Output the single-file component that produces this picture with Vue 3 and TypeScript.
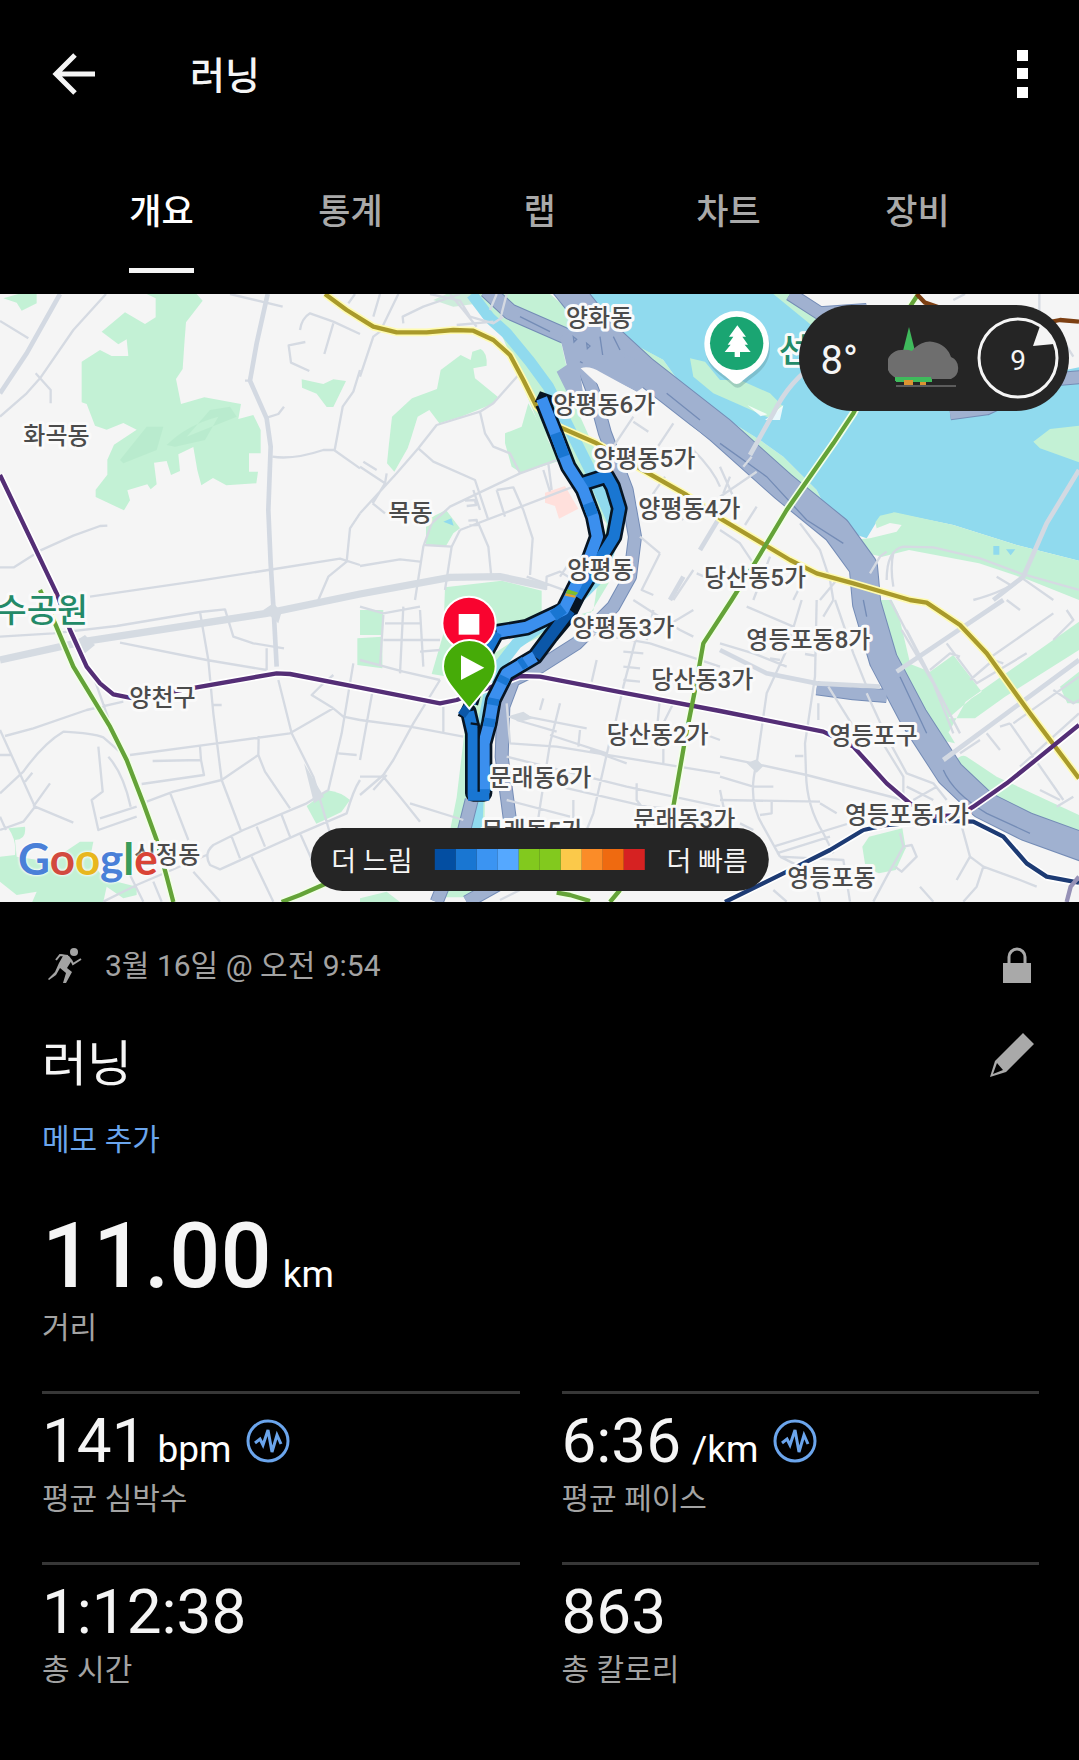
<script setup lang="ts">
import { ref } from 'vue'

interface Tab { id: string; label: string }
interface Stat { value: string; unit?: string; label: string; chart?: boolean }
interface Place { name: string; x: number; y: number }
interface Sheet { x: number; y: number; lines: string }

const tabs: Tab[] = [
  { id: 'overview', label: '개요' },
  { id: 'stats', label: '통계' },
  { id: 'laps', label: '랩' },
  { id: 'charts', label: '차트' },
  { id: 'gear', label: '장비' },
]
const activeTab = ref('overview')

const stats: Stat[] = [
  { value: '141', unit: 'bpm', label: '평균 심박수', chart: true },
  { value: '6:36', unit: '/km', label: '평균 페이스', chart: true },
  { value: '1:12:38', label: '총 시간' },
  { value: '863', label: '총 칼로리' },
]

const paceColors = ['#034ea2', '#1976d2', '#3b94f2', '#55a8ff', '#82c91e', '#82c91e', '#fbc94a', '#fb8c28', '#ef6a10', '#d62222']

const googleLetters = [
  { ch: 'G', color: '#4a80d8' },
  { ch: 'o', color: '#d24a3f' },
  { ch: 'o', color: '#e8b71e' },
  { ch: 'g', color: '#4a80d8' },
  { ch: 'l', color: '#3a9c5a' },
  { ch: 'e', color: '#d94436' },
]

const places: Place[] = [
  { name: '화곡동', x: 70, y: 463 },
  { name: '목동', x: 1165, y: 692 },
  { name: '양화동', x: 1698, y: 107 },
  { name: '양평동6가', x: 1660, y: 370 },
  { name: '양평동5가', x: 1780, y: 530 },
  { name: '양평동4가', x: 1915, y: 681 },
  { name: '양평동', x: 1702, y: 863 },
  { name: '당산동5가', x: 2112, y: 888 },
  { name: '양평동3가', x: 1717, y: 1038 },
  { name: '영등포동8가', x: 2239, y: 1074 },
  { name: '당산동3가', x: 1954, y: 1194 },
  { name: '당산동2가', x: 1820, y: 1360 },
  { name: '영등포구', x: 2488, y: 1363 },
  { name: '문래동6가', x: 1468, y: 1487 },
  { name: '영등포동1가', x: 2535, y: 1598 },
  { name: '문래동5가', x: 1444, y: 1646 },
  { name: '문래동3가', x: 1900, y: 1614 },
  { name: '영등포동', x: 2362, y: 1787 },
  { name: '양천구', x: 388, y: 1248 },
  { name: '신정동', x: 402, y: 1718 },
]

// Street lines, grouped by map sheet; each sheet has its own origin.
const streets: Sheet[] = [
  { x: 0, y: 0, lines: 'M0 93L85 145M318 12L220 120 120 265 80 310 0 380M107 250L152 300V340M0 832H42L120 782 220 737 300 708 322 707M690 12L848 50M803 382L835 372 852 350M817 500Q880 510 970 480L1002 480 1080 535M900 120Q905 85 930 70L1000 95 1080 132M1000 100L973 192M916 156L866 166 873 218 928 243M1080 240L1060 305 1028 350 1004 480M270 920L600 872 805 840 1020 806 1080 825M1080 670L1050 715 1040 815 985 860 955 930M735 272H750M1065 12L1045 40' },
  { x: 1080, y: 0, lines: 'M115 12L60 125 40 140 0 260M60 12L40 80M130 100L128 80 190 50 300 12M210 12L300 32 330 80 400 100 430 80M270 12L310 60 350 110M290 105L400 95M480 250L400 340 360 365 230 405 175 475 110 550 0 670M360 365L375 430 400 470 450 490 480 550M175 475L220 515 345 570 385 690M0 530L75 580 38 640M10 515L50 540M38 640L75 670M80 550L75 580M590 510L480 550 270 650 215 700 190 770 165 930M300 720L640 590M300 720L275 770 255 900M340 600L360 660M410 600L435 680M410 600L460 592 490 660 518 745 510 855M315 632L345 630 348 645 320 648M325 692L350 690 352 705 328 706M355 700L385 770 395 870M195 765L275 770M0 828L120 808 180 815M550 540L570 605M565 520L575 600M558 900L560 860 600 845 625 860M640 800L600 860M900 790L845 900 880 915M1000 840L940 930M900 790L840 740M1010 850L1080 880M820 380L740 500M820 395L865 425M940 400L880 490M915 560L880 610 970 690M1000 480Q1060 540 1080 590M500 860L640 910M440 12L420 90M410 12L390 60' },
  { x: 2160, y: 0, lines: 'M0 620L110 545M110 650L75 705M0 530L40 620M30 560L10 610M95 500L70 530M0 720L60 760 100 820M150 800L100 930M240 700L300 780 330 870 340 930M245 880L220 930M350 870L300 930M500 870Q500 780 550 770L640 772 780 805 900 850 1077 900M520 790Q510 830 520 890M500 785L480 800 450 850M735 12L700 30M880 890L830 860M958 12V90M1010 120L1060 200M900 860L1000 930M905 860Q870 900 760 930' },
  { x: 0, y: 930, lines: 'M0 110L160 100 350 78 600 36 675 28 700 110 760 130 852 145M360 128L620 180 800 210M800 145V210M600 36L625 180 640 340 665 540 722 690M640 315H665M15 408L100 385 260 330 370 305M0 390L105 620 70 665 0 690M105 620L220 668M0 465H32M0 580L70 515Q130 430 190 395Q280 400 310 412L365 460M75 545L97 518M100 620L150 550M390 465L650 430 870 400 1000 325M875 400L940 530 990 700M600 440L603 480 458 483M603 480L612 525 425 552M665 540L775 465 776 408M775 465L795 515 870 625M440 605L520 575 665 540M510 578L565 720M295 440L308 575 275 600 295 690 410 650M300 655L410 620M325 470Q370 520 392 620M270 200L325 355M1000 325L935 285 965 255 1000 225M1000 325L1030 350 1080 360M1060 190L1025 400 985 570 920 610 730 690 640 735Q610 760 630 795L660 808 900 700 1040 640Q1060 570 1080 540M770 680L795 740M845 645L870 710M695 710L720 775M755 770L820 905M900 700L945 800M1015 460L1070 465M310 905L410 855 620 765M390 825L430 905M460 845L485 905M580 815L660 905M0 650L18 690M835 240L875 400' },
  { x: 1080, y: 930, lines: 'M0 20L70 40 180 20M0 180L130 215 240 240M70 45L60 200M130 20L120 220M180 30L190 200M75 70H180M70 120H240M180 155L240 150M240 240L160 370 100 480 70 525 0 585M40 260L0 480M0 360L150 380 310 410M250 320V395M0 530H70L120 590 180 665M80 525L40 570M150 610L310 660M440 310L450 430M550 295L540 330M470 360L590 395M500 350L680 385M600 310L570 430 540 620 530 690M450 430L590 440 1080 520M570 405L740 460M440 470L800 560 1080 620M660 390L655 440M750 420L700 640 680 690M690 450L800 490M840 70L790 260 750 440M870 130L1080 200M790 155L850 160M790 200L840 205M790 240L840 245M710 180L695 245M880 30L860 120M700 100L870 130M910 440V490M830 550V600L890 680M600 560L860 620 1080 640M940 310L910 370M820 0L960 90 1000 110M1000 30L900 90M440 600L630 650M420 900L480 870M900 290L890 400M1000 390L1080 420M640 600V690' },
  { x: 2160, y: 930, lines: 'M0 130L100 160 200 200M80 20L220 80M245 0L200 150 140 280 110 490Q80 600 130 680L180 770M290 0L285 230 255 430 258 520Q260 620 310 700L340 760M310 50L340 0M345 0L400 160 440 260M325 260L400 380M150 175L180 180M255 162L290 168M225 468H250M295 310V360M440 280L500 410 560 520 640 550 680 600M470 400L550 530 550 600M0 470L100 490 260 525 550 600M0 530L100 560 160 560M0 600L300 605M300 610L350 640M0 570L25 690M160 740L420 660M170 760L330 710M180 770L280 820 300 905M180 770L370 780 390 905M100 690L60 670M155 600V640L120 645M540 700L550 740 500 830 460 905M550 740L575 735 590 770 545 815 525 800M720 660L750 770 710 840M750 770L790 800 770 860 730 905M790 800L900 840 950 860M545 90L640 250 700 400M560 90L720 400M510 0L720 400M630 210L690 160 720 170M750 240L820 180 850 190M680 130L770 250 920 160M800 180L1000 40M860 0L900 30M1040 30L1060 60 1000 120M870 370L1030 600M880 370L1077 230M1020 600L960 570M900 500L1077 340M800 400L840 450M840 380L870 370M780 420L720 460M1060 590L1010 620M160 870L200 905M1000 270L1060 310 1077 300M580 600L650 560M560 560L640 600M600 860L640 905' },
]
</script>

<template>
  <main class="screen">
    <header class="topbar">
      <button class="icon-button" type="button" aria-label="뒤로">
        <svg width="44" height="44" viewBox="0 0 44 44" fill="none" stroke="#f5f5f5" stroke-width="5">
          <path d="M23 3L4 22l19 19M4 22h39" />
        </svg>
      </button>
      <h1 class="topbar-title">러닝</h1>
      <button class="icon-button" type="button" aria-label="더보기">
        <svg width="11" height="48" viewBox="0 0 11 48" fill="#fff">
          <path d="M0 0h11v11H0zM0 18h11v11H0zM0 37h11v11H0z" />
        </svg>
      </button>
    </header>

    <nav class="tabs">
      <button
        v-for="tab in tabs"
        :key="tab.id"
        class="tab"
        :class="{ active: tab.id === activeTab }"
        type="button"
        @click="activeTab = tab.id"
      >
        <span class="tab-label">{{ tab.label }}</span>
      </button>
    </nav>

    <section class="map">
      <svg class="map-canvas" viewBox="0 12 3237 1824" role="img" aria-label="러닝 경로">
        <rect y="12" width="3237" height="1824" fill="#f5f5f5" />

        <g fill="#c3f1d5">
          <path d="M10 25L55 12h55v28L65 62 50 38zM440 12h150l18 20-50 65-5 65-5 75-20 30 15 75 70-20 110 20-8 45 45-12 22 45v70h-35v55h27l-5 35-90 6-40-22-35 22-12-45-12-70-45 22 5 50-27 12-13-42-38 5 8 65-18 15-10-15-60 18 8 30-18 30-85-40v-22l35-45v-45l20-45 68-45-40-20-50 20-35-12-25-65-15-5V215l55-35 35 18h50l-5-50-25 15-50-38 70-58 60 35 32-20V25z" />
          <path d="M905 268l65 14 30-14 38 5-38 78h-20l-30-40-44-18z" />
          <path d="M1322 240l60-45 30 15 5-25 25-8q20 10 18 50l-40 8 5 30 68 55-10 20-100 40-65 20-30-40-35 20-20 65-10 30-40 70-22-25 5-50 10-90 60-55 75-28z" />
          <path d="M1585 340l80 150 20 20-120 40-30-20-20-70v-30l50-20z" />
          <path d="M1278 690l60-30 42 55-20 15-22 38-60-5z" />
          <path d="M1335 892l170-20 120 30v60q-20 50-90 65l-100 10-80 125-60-10 35-120z" />
          <path d="M1410 12h240l140 120-110 10 20 90 10 80 90 200 50 200-20 160-60 100-240 110-70 120-10 620h-140l60-300 30-250 80-180 120-80 180-50 40-260-200-290-120-290z" />
          <path d="M1072 1045v80l75 10v-95zM1080 960h70l-4 75h-66z" />
          <path d="M2321 12h48l170 110-20 40zM1845 130l145 80 50 70 120 95 120 75 70 50 100 100 35 70-45-20-280-218-230-182z" />
          <path d="M920 1548l62-47q40 5 68 29l-26 36q-30 15-75 35z" />
          <path d="M0 1700l45-5q5-45-20-80l50-5q5 40-30 40l5 50 100 15 90-60h40l-10 50 40 60 100 25v25l-40 10-50-35-10 45-10 40H80l30-70-60 10-50-40z" />
          <path d="M1080 1825l80-20 40 31h-120z" />
          <path d="M2587 1670l20-30 100-25 10 60-30 65-50 10-40-15z" />
          <path d="M2630 930h45l20 40 40 170 130 220-45-10-110-140-40-75z" />
          <path d="M2790 1145l70-50 85 110-30 20-70 60h80l90-65L3237 1080v-85l-340 240-50 90-65 15-95-145-50-45 50-45zM3180 1190l57-45v95h-35z" />
          <path d="M2860 1420q20-30 40-20l90 60 247 115v70l-110-25-220-120z" />
        </g>
        <g fill="#b4e8ca" opacity=".6">
          <path d="M500 755q60-60 155-85l-40 70-90 20zM360 800l80-100 50 0-20 70-100 40zM480 180l60-85-20 70zM560 730l150-60-20-30-60 10zM1300 320l110-50 30 60-80 10z" transform="translate(0 -290)" />
        </g>

        <path fill="#ffe0dc" d="M1635 608l60-20 40 68-58 30-12-38-30-10z" />

        <path fill="#90daee" d="M1735 12l125 128 130 70 50 70 120 95 120 75 70 50 100 100 35 70 70 60 45 15 30-50 50-27 180 37 190 60 187 47V12z" />
        <path fill="#f5f5f5" d="M2369 12l150 160 330 140 388-80V12z" />
        <g fill="#c3f1d5">
          <path d="M1735 12l125 128 130 70-140 50-150-248zM2070 205l45 10 45 55h60l90 40 40 40-40 35-90-40-80-35-60-50zM3100 455l50-38 87-10v110l-117-42zM2320 12h50l170 120v60z" />
          <path d="M2610 745l80-20 15-20-35-6-40 16-4-18 14-20 44-10 176 38 190 60 187 47v118l-150-60-150-50-210-40-80 20-90-20-70-40 20-20 45 30z" />
        </g>
        <path fill="#fff" opacity=".8" d="M2350 345l-10 45h-45zM2242 345l60 28-20 6z" />
        <path fill="#90daee" d="M1330 695l24-10 7 22zM2980 768h18v26h-18zM3018 778h28l-14 18z" />

        <g class="stream">
          <path d="M1415 12L1470 85 1520 130 1590 215 1645 290 1700 400 1770 540 1850 720 1800 860 1720 940 1550 1060 1480 1150 1440 1350 1430 1630" />
        </g>

        <g class="highway edge">
          <path class="wide" d="M1690 -20L1810 130 1930 240 2160 420 2350 590 2510 720 2590 830 2600 940 2650 1110 2740 1280 2850 1450 2950 1545 3080 1610 3260 1675" />
          <path d="M1460 0L1530 65 1690 135 1800 180 1900 230" />
          <path class="slim" d="M1750 230L1785 320 1815 430 1880 600 1905 740 1890 860 1840 950 1730 1060 1620 1130 1540 1170 1510 1250 1505 1400 1535 1630" />
          <path class="slim" d="M1415 1530L1385 1650 1310 1836M1500 1780L1400 1836" />
          <path class="slim" d="M2370 12L2460 70 2600 60" />
          <path class="slim" d="M2450 1195L2560 1210 2660 1218" />
          <path class="slim" d="M2850 370L2960 355 3140 270 3260 260" />
        </g>
        <g class="highway body">
          <path class="wide" d="M1690 -20L1810 130 1930 240 2160 420 2350 590 2510 720 2590 830 2600 940 2650 1110 2740 1280 2850 1450 2950 1545 3080 1610 3260 1675" />
          <path d="M1460 0L1530 65 1690 135 1800 180 1900 230" />
          <path class="slim" d="M1750 230L1785 320 1815 430 1880 600 1905 740 1890 860 1840 950 1730 1060 1620 1130 1540 1170 1510 1250 1505 1400 1535 1630" />
          <path class="slim" d="M1415 1530L1385 1650 1310 1836M1500 1780L1400 1836" />
          <path class="slim" d="M2370 12L2460 70 2600 60" />
          <path class="slim" d="M2450 1195L2560 1210 2660 1218" />
          <path class="slim" d="M2850 370L2960 355 3140 270 3260 260" />
        </g>
        <path fill="#a0b1d0" d="M1680 140l80-35 80 20 40 90 60 70-30 20-120-60-50 0 10 70-50-10-30-60 30-20z" />
        <path fill="none" stroke="#748cb6" stroke-width="4" d="M1720 140l10 8-8 8zM1760 160l10 8-8 8zM1740 215l8 4M1800 140l8 55M1840 140l20 40M2160 460L2300 560 2420 690 2530 760M2590 930L2600 980M2700 1160L2780 1330M2830 1440Q2860 1510 2960 1570L3090 1630M2000 310L2100 390M1560 80L1650 125" />
        <path fill="#f5f5f5" d="M1742 235q25-10 60 12l165 90 110 75q90 60 85 130l-20 20q-60-60-140-140l-90-40-130-110z" />

        <g class="streets">
          <g v-for="(sheet, i) in streets" :key="i" :transform="`translate(${sheet.x} ${sheet.y})`">
            <path :d="sheet.lines" />
          </g>
        </g>
        <g class="avenues">
          <path d="M180 12L80 190 0 310" />
          <path d="M803 12L770 160 750 272 800 385 812 470 805 660 812 820 822 980 830 1130" />
          <path d="M2450 220Q2370 270 2320 370L2250 495M3237 540L3140 700 3070 860 2980 930M2160 1080L2300 1150 2450 1180 2640 1190M2690 1145L3010 930M2830 1410L3237 1110M2100 780L2160 680M2050 860L2010 930" />
        </g>
        <g class="arterial">
          <path d="M0 1110L250 1055 800 970 1080 912 1350 862 1500 860 1640 890" />
        </g>
        <path fill="#d5dbe2" d="M912 1420l30 120 30-20zM790 960l30-20 25 25-10 35zM215 1060l40-25 30 30-30 25zM1520 1280l50-15 30 20-40 10zM2240 1420l30-12 20 20-20 20z" />

        <g class="rail-halo">
          <path d="M975 12L1040 60 1080 85 1120 110 1190 127H1280L1360 120 1420 122 1480 150 1530 195 1570 270 1610 350 1680 412 1790 460 1910 530 2060 615 2160 685 2370 810 2450 850 2560 880 2730 930 2780 938 2880 1005 2960 1090 3090 1270 3237 1465" stroke="#fffbb0" />
          <path d="M0 555L170 910 210 1020 260 1130 300 1180 340 1213 400 1225 590 1192 830 1150 870 1152 1080 1193 1320 1240 1370 1230 1560 1158 1620 1160 1880 1210 2160 1263 2470 1325 2560 1370 2660 1480 2730 1540 2800 1580 2880 1575 2920 1550 3020 1480 3120 1400 3237 1305" />
          <path d="M120 900L165 1000 220 1130 330 1310 380 1410 430 1540 470 1650 500 1760 520 1836M2755 12L2730 50 2560 370 2500 460 2360 660 2270 810 2195 930 2110 1060 2085 1200 2055 1350 2020 1550M845 1836L900 1815 980 1780 1080 1740M1670 1808L1710 1815 1770 1833M1830 1836L1860 1800" stroke="#f2ffe8" />
          <path d="M2175 1836L2350 1750 2490 1680 2590 1620 2660 1605 2800 1592 2920 1595 3010 1640 3080 1720 3140 1760 3237 1778" />
        </g>
        <g class="rail">
          <path stroke="#a99a2b" d="M975 12L1040 60 1080 85 1120 110 1190 127H1280L1360 120 1420 122 1480 150 1530 195 1570 270 1610 350 1680 412 1790 460 1910 530 2060 615 2160 685 2370 810 2450 850 2560 880 2730 930 2780 938 2880 1005 2960 1090 3090 1270 3237 1465" />
          <path stroke="#542e76" d="M0 555L170 910 210 1020 260 1130 300 1180 340 1213 400 1225 590 1192 830 1150 870 1152 1080 1193 1320 1240 1370 1230 1560 1158 1620 1160 1880 1210 2160 1263 2470 1325 2560 1370 2660 1480 2730 1540 2800 1580 2880 1575 2920 1550 3020 1480 3120 1400 3237 1305" />
          <path stroke="#64a338" d="M120 900L165 1000 220 1130 330 1310 380 1410 430 1540 470 1650 500 1760 520 1836M2755 12L2730 50 2560 370 2500 460 2360 660 2270 810 2195 930 2110 1060 2085 1200 2055 1350 2020 1550M845 1836L900 1815 980 1780 1080 1740M1670 1808L1710 1815 1770 1833M1830 1836L1860 1800" />
          <path stroke="#1d3b74" d="M2175 1836L2350 1750 2490 1680 2590 1620 2660 1605 2800 1592 2920 1595 3010 1640 3080 1720 3140 1760 3237 1778" />
          <path stroke="#9691b6" d="M3237 1760L3212 1790 3200 1836" />
          <path stroke="#7c3f12" d="M2750 12L2775 38 2840 60M3140 98L3180 90 3237 95" />
        </g>

        <g class="route-edge">
          <path d="M1630 340L1670 440 1705 530 1750 600 1780 680 1792 740 1770 800 1720 900 1690 960 1580 1012 1490 1027 1450 1100 1410 1240" />
          <path d="M1750 580L1820 558 1838 590 1858 655 1842 740 1780 840 1730 920 1700 980 1650 1040 1605 1100 1520 1150 1480 1230 1468 1300 1452 1360 1452 1510H1420V1330L1405 1265 1384 1255" />
        </g>
        <path fill="#071523" d="M1604 336l16-32 40 14v30z" />
        <g class="route">
          <path stroke="#1976d2" d="M1750 580L1820 558 1838 590 1858 655 1842 740 1780 840 1730 920" />
          <path stroke="#0b57a8" d="M1710 960L1650 1040 1605 1100" />
          <path stroke="#3b8fee" d="M1625 325L1670 440 1705 530 1750 600 1780 680 1792 740 1770 800 1720 900 1690 960 1580 1012 1490 1027" />
          <path stroke="#1976d2" d="M1667 430L1692 500M1490 1027L1450 1100 1410 1240M1765 640L1778 675M1420 1520V1330L1405 1265M1660 978L1690 955" />
          <path stroke="#3b8fee" d="M1605 1100L1520 1150 1480 1230 1468 1300 1452 1360 1452 1510" />
          <path stroke="#0b57a8" d="M1405 1270L1384 1255" />
          <path stroke="#1976d2" d="M1575 1115L1560 1125M1515 1160L1505 1180M1482 1225L1478 1245M1470 1285L1466 1310M1404 1515H1468" />
        </g>
        <path fill="#7fbf2a" d="M1703 898l32 10-8 8-30-6z" />
        <path fill="#e3a22c" d="M1698 910l30 7-3 6-30-6z" />
        <path stroke="#071523" stroke-width="7" fill="none" d="M1436 1310V1505M1412 1300l26 4" />

        <g class="places">
          <text v-for="place in places" :key="place.name" :x="place.x" :y="place.y">{{ place.name }}</text>
        </g>
        <g class="parks">
          <text x="-12" y="997">수공원</text>
          <text x="2336" y="215">선</text>
        </g>

        <path d="M2210 66a97 97 0 0 0-97 97c0 55 35 78 62 98 18 14 25 24 35 24s17-10 35-24c27-20 62-43 62-98a97 97 0 0 0-97-97z" fill="#5b8d93" opacity=".35" transform="translate(3 8)" />
        <path d="M2210 63a97 97 0 0 0-97 97c0 55 35 78 62 98 18 14 25 24 35 24s17-10 35-24c27-20 62-43 62-98a97 97 0 0 0-97-97z" fill="#fff" />
        <circle cx="2210" cy="160" r="80" fill="#1aa572" />
        <path fill="#fff" d="M2212 106l26 34h-11l17 24h-10l18 22h-32v15h-16v-15h-30l18-22h-9l17-24h-13z" />

        <circle cx="1407" cy="1000" r="80" fill="#f9042f" stroke="#fff" stroke-width="6" />
        <path fill="#fff" d="M1376 972h62v62h-62z" />
        <path d="M1408 1050a79 79 0 0 0-79 79c0 42 36 72 79 127 43-55 79-85 79-127a79 79 0 0 0-79-79z" fill="#46ab08" stroke="#fff" stroke-width="6" />
        <path fill="#fff" d="M1383 1096v74l70-37z" />
      </svg>

      <span class="google" aria-label="Google"><span v-for="(l, i) in googleLetters" :key="i" :style="{ color: l.color }">{{ l.ch }}</span></span>

      <div class="weather">
        <span class="temp">8°</span>
        <svg width="76" height="62" viewBox="0 0 76 62" aria-hidden="true">
          <path fill="#3fba5c" d="M21 0l6 24H15zM8 50h36v5H8z" />
          <path fill="#6e6e6e" d="M14 52a14 14 0 0 1-1-29q6-1 11 1a22 22 0 0 1 39 6 12 12 0 0 1 0 22z" />
          <path fill="#3fba5c" d="M7 50h36v4H7z" />
          <path fill="#dc9432" d="M16 53h9v5h-9zM32 55h6v3h-6z" />
          <path fill="#5c5c5c" d="M8 58h60v2H8z" />
        </svg>
        <span class="wind">
          <svg class="wind-ring" width="84" height="84" viewBox="0 0 84 84" aria-hidden="true">
            <circle cx="42" cy="42" r="39" fill="none" stroke="#f5f5f5" stroke-width="3" />
            <path fill="#f5f5f5" d="M64 10q10 7 14 18l-21 2z" />
          </svg>
          <span class="wind-speed">9</span>
        </span>
      </div>

      <div class="legend">
        <span>더 느림</span>
        <span class="scale"><i v-for="(c, i) in paceColors" :key="i" :style="{ background: c }"></i></span>
        <span>더 빠름</span>
      </div>
    </section>

    <section class="details">
      <div class="meta">
        <svg class="runner" width="36" height="36" viewBox="0 0 36 36" aria-hidden="true">
          <circle cx="27" cy="5" r="4" fill="#a3a3a3" />
          <path fill="none" stroke="#a3a3a3" stroke-width="2" d="M9 13l4-5 8 1M24 13l2 4 8-5" />
          <path fill="#a3a3a3" d="M13 7l9 2 3 4-5 8 5 4-6 11h-3l3-10-6-5-4 7-7 5-1-1 7-7 4-9 4-7z" />
        </svg>
        <span class="date">3월 16일 @ 오전 9:54</span>
        <svg class="lock" width="28" height="36" viewBox="0 0 28 36" aria-label="비공개">
          <path fill="#a9a9a9" d="M0 16h28v20H0z" />
          <path fill="none" stroke="#a9a9a9" stroke-width="3" d="M6 17V10a8 8 0 0 1 16 0v7" />
        </svg>
      </div>

      <div class="heading">
        <h2>러닝</h2>
        <button class="icon-button edit" type="button" aria-label="편집">
          <svg width="44" height="44" viewBox="0 0 44 44">
            <path fill="#a9a9a9" fill-rule="evenodd" d="M33 0l11 11-28 28-16 5 5-16zM7 30l-4 11 10-4z" />
          </svg>
        </button>
      </div>
      <a class="note" href="#">메모 추가</a>

      <div class="distance">
        <p class="value distance-value"><span>11.00</span><span class="unit">km</span></p>
        <p class="label">거리</p>
      </div>

      <div class="stats">
        <div v-for="stat in stats" :key="stat.label" class="stat">
          <p class="value">
            <span>{{ stat.value }}</span>
            <span v-if="stat.unit" class="unit">{{ stat.unit }}</span>
            <svg v-if="stat.chart" class="chart" width="44" height="44" viewBox="0 0 44 44" fill="none" stroke="#6ba5ec" aria-hidden="true">
              <circle cx="22" cy="22" r="20" stroke-width="3" />
              <path stroke-width="3" d="M9 24l5-4 3 6 5-15 4 22 5-17 4 9" />
            </svg>
          </p>
          <p class="label">{{ stat.label }}</p>
        </div>
      </div>
    </section>
  </main>
</template>

<style>
body {
  margin: 0;
  background: #000;
}
</style>

<style scoped>
.screen {
  min-height: 100vh;
  background: #000;
  color: #f5f5f5;
  font-family: Roboto, "Noto Sans CJK KR", sans-serif;
}
h1,
h2,
p {
  margin: 0;
  font-weight: 400;
}
button {
  border: 0;
  padding: 0;
  background: none;
  font: inherit;
  color: inherit;
}
.icon-button {
  display: flex;
}
.topbar {
  display: flex;
  align-items: center;
  height: 148px;
  padding: 0 51px 0 52px;
}
.topbar-title {
  flex: 1;
  margin-left: 94px;
  padding-top: 3px;
  font-size: 38px;
  line-height: 56px;
  font-weight: 500;
}
.tabs {
  display: flex;
  padding: 0 67px 21px;
}
.tab {
  flex: 1;
  color: #a9a9a9;
  font-size: 35px;
  font-weight: 500;
}
.tab-label {
  display: inline-block;
  padding-top: 10px;
  line-height: 110px;
  border-bottom: 5px solid transparent;
}
.tab.active {
  color: #fff;
}
.tab.active .tab-label {
  border-color: #f5f5f5;
}

.map {
  position: relative;
  overflow: hidden;
}
.map-canvas {
  display: block;
  width: 100%;
}
.stream {
  fill: none;
  stroke: #90daee;
  stroke-width: 34;
}
.highway {
  fill: none;
  stroke-linejoin: round;
}
.edge path {
  stroke: #748cb6;
  stroke-width: 50;
}
.body path {
  stroke: #a0b1d0;
  stroke-width: 44;
}
.edge .wide {
  stroke-width: 88;
}
.body .wide {
  stroke-width: 82;
}
.edge .slim {
  stroke-width: 42;
}
.body .slim {
  stroke-width: 36;
}
.streets {
  fill: none;
  stroke: #d5dae2;
  stroke-width: 7;
  stroke-linejoin: round;
}
.avenues {
  fill: none;
  stroke: #d3d9e2;
  stroke-width: 14;
}
.arterial {
  fill: none;
  stroke: #d5dbe2;
  stroke-width: 22;
}
.rail-halo,
.rail {
  fill: none;
  stroke-width: 13;
  stroke-linejoin: round;
}
.rail-halo {
  stroke: #fff;
  stroke-width: 23;
}
.route,
.route-edge {
  fill: none;
  stroke: #071523;
  stroke-width: 50;
  stroke-linejoin: round;
}
.route {
  stroke-width: 34;
}
.places,
.parks {
  fill: #4b4b4b;
  font-size: 72px;
  font-weight: 500;
  stroke: #fafafa;
  stroke-width: 18;
  stroke-linejoin: round;
  paint-order: stroke;
}
.parks {
  fill: #238a68;
  font-size: 100px;
}
.google {
  position: absolute;
  left: 18px;
  bottom: 14px;
  font-family: Lato, sans-serif;
  font-size: 44px;
  font-weight: 700;
  line-height: 60px;
  text-shadow: 0 0 3px #fff, 0 0 3px #fff;
}
.weather {
  position: absolute;
  top: 11px;
  right: 10px;
  display: flex;
  align-items: center;
  gap: 22px;
  height: 106px;
  padding: 0 9px 0 22px;
  border-radius: 53px;
  background: #252525;
}
.temp {
  padding: 4px 8px 0 0;
  font-size: 40px;
}
.wind {
  position: relative;
  display: grid;
  place-items: center;
  width: 84px;
  height: 84px;
  margin-left: -10px;
  font-size: 28px;
}
.wind-speed {
  padding-top: 4px;
}
.wind-ring {
  position: absolute;
  inset: 0;
}
.legend {
  position: absolute;
  left: 50%;
  bottom: 11px;
  transform: translateX(-50%);
  display: flex;
  align-items: center;
  gap: 22px;
  height: 63px;
  padding: 0 21px;
  border-radius: 32px;
  background: #252525;
  font-size: 27px;
  white-space: nowrap;
}
.scale {
  display: flex;
}
.scale i {
  width: 21px;
  height: 21px;
}

.details {
  padding: 38px 40px 70px 42px;
}
.meta {
  display: flex;
  align-items: center;
  height: 50px;
  color: #a3a3a3;
  font-size: 30px;
}
.date {
  padding-bottom: 4px;
}
.runner {
  margin: 0 22px 0 5px;
}
.lock {
  margin: 0 8px 0 auto;
}
.heading {
  display: flex;
  justify-content: space-between;
  margin-top: 38px;
}
.heading h2 {
  font-size: 49px;
  line-height: 74px;
}
.edit {
  align-self: flex-start;
  padding: 5px;
}
.note {
  display: block;
  width: max-content;
  margin-top: 18px;
  color: #6ba5ec;
  font-size: 30px;
  line-height: 40px;
  text-decoration: none;
}
.distance {
  margin: 45px 0 43px;
}
.value {
  display: flex;
  align-items: baseline;
  font-size: 62px;
  line-height: 76px;
}
.distance-value {
  font-size: 90px;
  font-weight: 500;
  line-height: 103px;
}
.unit {
  margin-left: 11px;
  color: #fff;
  font-size: 37px;
  font-weight: 400;
  line-height: 38px;
}
.label {
  color: #a3a3a3;
  font-size: 30px;
  line-height: 40px;
}
.stats {
  display: grid;
  grid-template-columns: 1fr 1fr;
  column-gap: 42px;
}
.stat {
  padding: 9px 0 43px;
  border-top: 3px solid #373737;
}
.chart {
  align-self: center;
  margin-left: 14px;
}
</style>
